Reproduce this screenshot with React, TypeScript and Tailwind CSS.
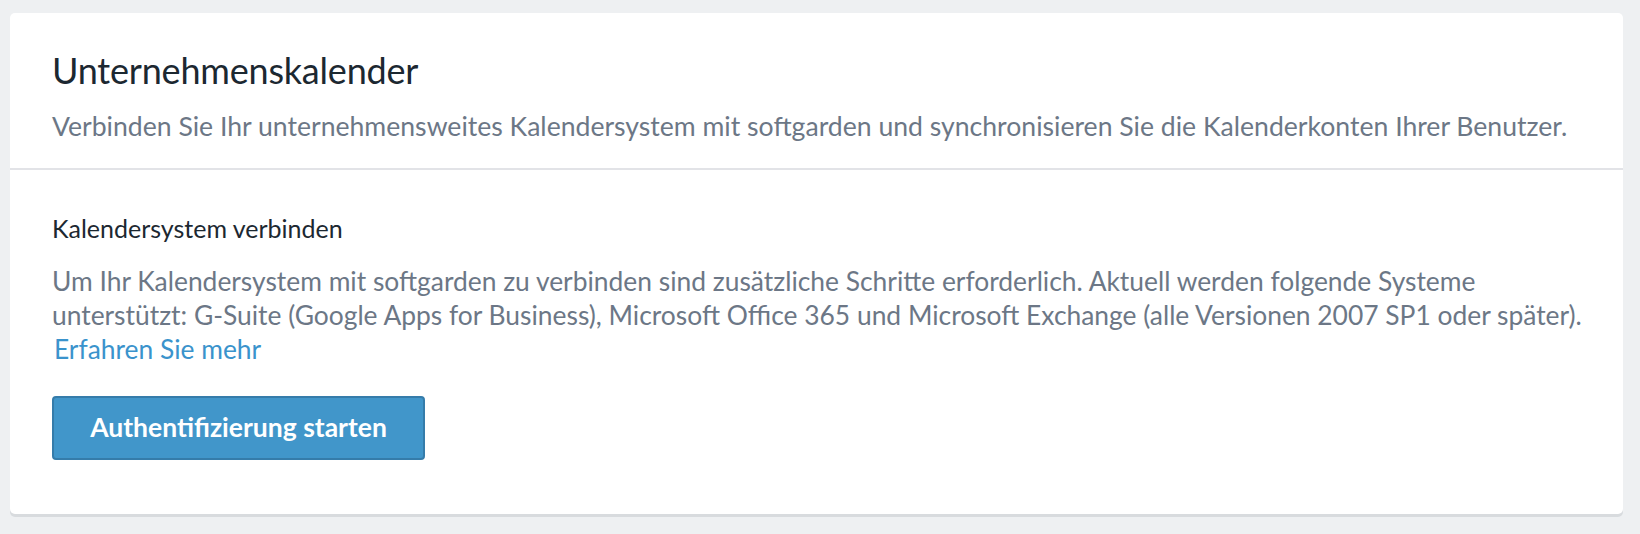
import React from "react";

export default function App() {
  return (
    <div className="min-h-[534px] w-full bg-[#eef0f2] pt-[13px] pl-[10px] pr-[17px] pb-[16px]" style={{ fontFamily: "Lato, 'Noto Sans', sans-serif" }}>
      <div className="rounded-[5px] bg-white shadow-[0_3px_0_0_#d8dbde]">
        <div className="border-b-2 border-[#e2e3e7] px-[42px] pt-[35px] pb-[27px]">
          <h1 className="text-[36px] leading-[44px] font-normal text-[#1c2831] tracking-[-0.2px]">Unternehmenskalender</h1>
          <p className="mt-[19px] text-[26.6px] leading-[30px] text-[#6c7786]">
            Verbinden Sie Ihr unternehmensweites Kalendersystem mit softgarden und synchronisieren Sie die Kalenderkonten Ihrer Benutzer.
          </p>
        </div>
        <div className="px-[42px] pt-[43px] pb-[54px]">
          <h2 className="text-[25px] leading-[30px] text-[#1c2831]">Kalendersystem verbinden</h2>
          <p className="mt-[21px] text-[26.4px] leading-[34px] text-[#6c7786]">
            <span className="block whitespace-nowrap">Um Ihr Kalendersystem mit softgarden zu verbinden sind zusätzliche Schritte erforderlich. Aktuell werden folgende Systeme</span>
            <span className="block whitespace-nowrap">unterstützt: G-Suite (Google Apps for Business), Microsoft Office 365 und Microsoft Exchange (alle Versionen 2007 SP1 oder später).</span>
            <a href="#" className="ml-[2px] block text-[#3a93cc]">Erfahren Sie mehr</a>
          </p>
          <button className="mt-[30px] h-[64px] w-[373px] rounded-[4px] border-2 border-[#357caa] bg-[#4196ca] text-[26.5px] font-bold text-white">
            Authentifizierung starten
          </button>
        </div>
      </div>
    </div>
  );
}
